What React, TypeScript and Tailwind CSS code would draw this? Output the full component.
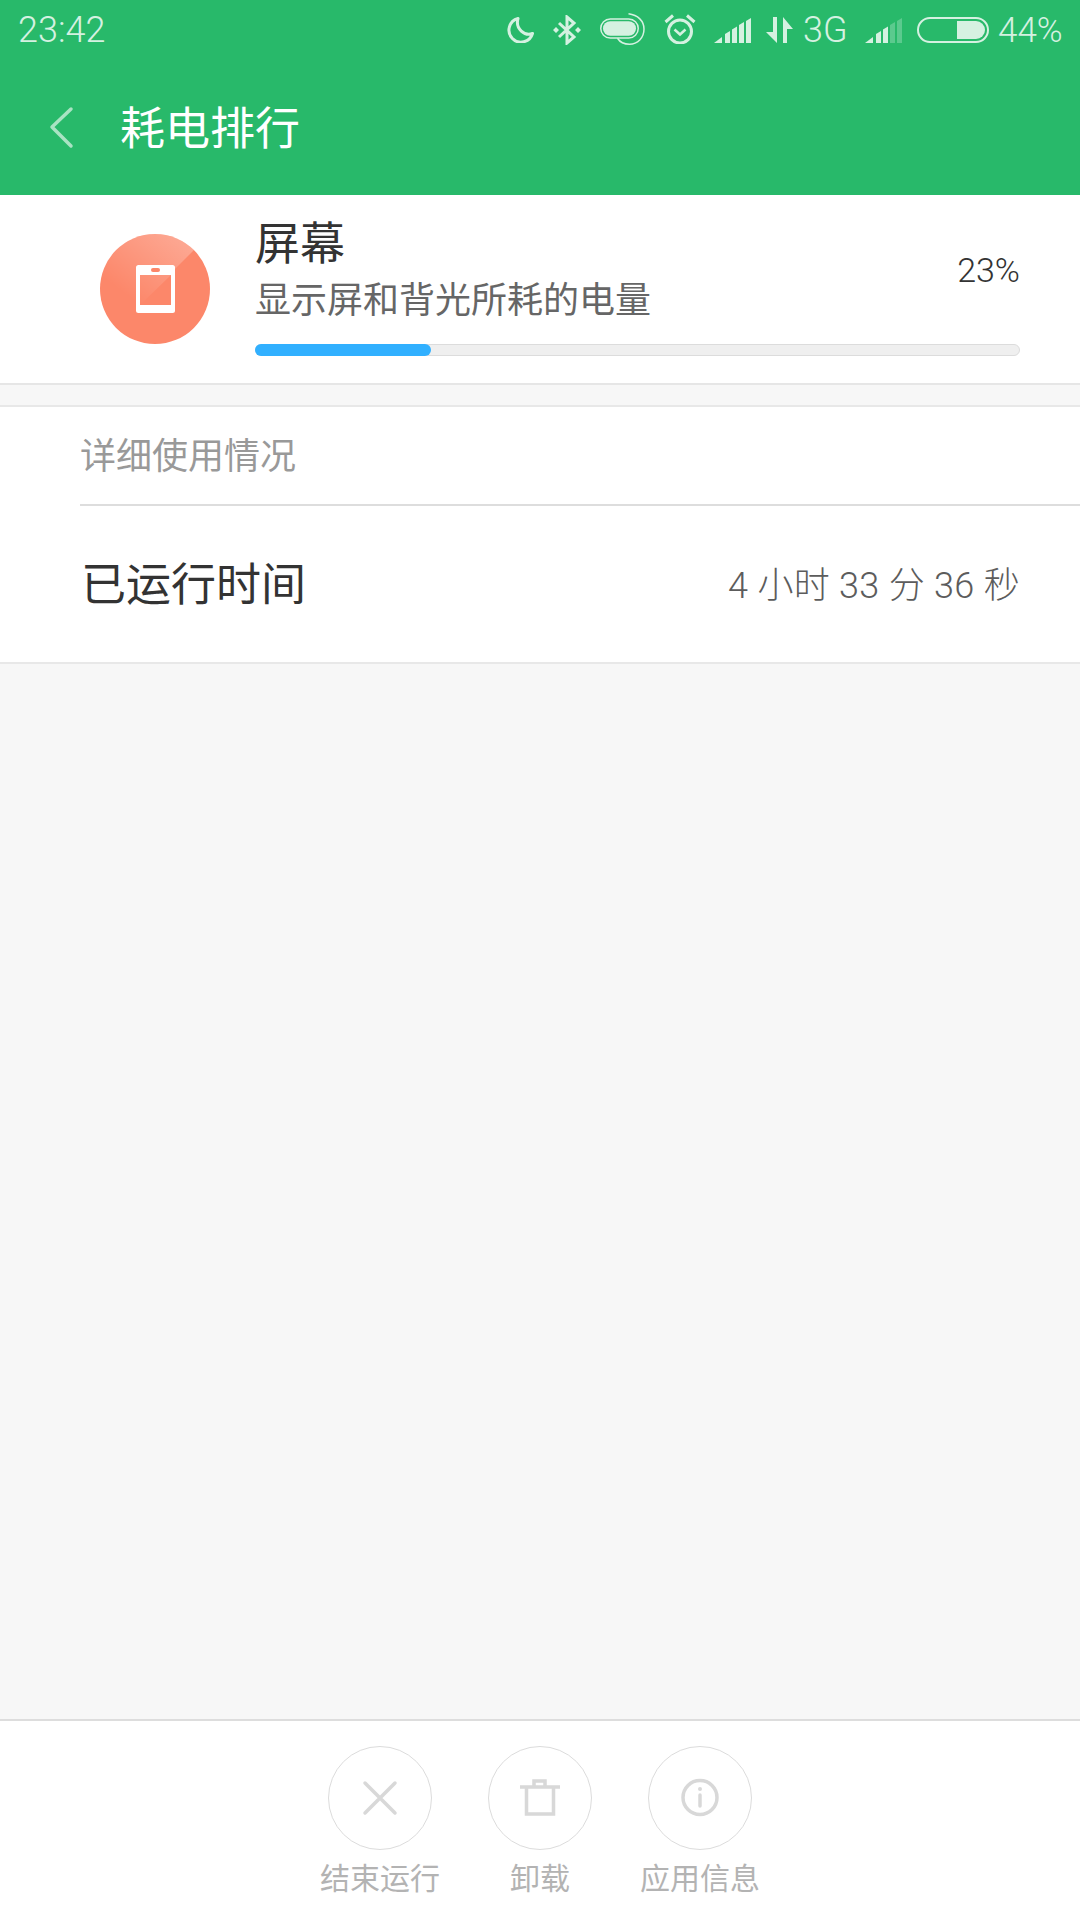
import React from "react";

const font = { fontFamily: "'Roboto', 'Noto Sans CJK SC', sans-serif" };
const c = "#d5f1e1";

function Signal({ dim }: { dim?: boolean }) {
  return (
    <svg width="37" height="25" viewBox="0 0 37 25" className="shrink-0">
      <path d="M0 25l8-6v6z" fill={c} />
      <path d="M11 16l5-3v12h-5z" fill={c} />
      <path d="M18 11.500l5-3V25h-5z" fill={c} />
      <path d="M25 7l5-3v21h-5z" fill={c} fillOpacity={dim ? 0.3 : 1} />
      <path d="M32 3l5-3v25h-5z" fill={c} fillOpacity={dim ? 0.3 : 1} />
    </svg>
  );
}

function StatusRow() {
  return (
    <div className="flex items-center h-[60px] text-[36px] text-[#d5f1e1] leading-none font-light">
      <svg width="27" height="26" viewBox="0 0 27 26" fill="none" className="shrink-0">
        <path d="M11 1.500A12 12 0 1 0 25.500 16.500C18 19.500 8 12 11 1.500z" stroke={c} strokeWidth="3" strokeLinejoin="round" />
      </svg>
      <svg width="28" height="30" viewBox="0 0 28 30" fill="none" className="ml-[19px] shrink-0">
        <path d="M6 8l15 14-7 6V2l7 6L6 22" stroke={c} strokeWidth="3" />
        <path d="M3 12l3 3-3 3-3-3zM25 12l3 3-3 3-3-3z" fill={c} />
      </svg>
      <svg width="45" height="32" viewBox="0 0 45 32" fill="none" className="ml-[19px] mb-[2px] shrink-0">
        <rect x="0.750" y="6" width="37.500" height="19" rx="9.500" stroke={c} strokeWidth="1.500" />
        <rect x="3" y="8.250" width="33" height="14.500" rx="7.250" fill={c} />
        <path d="M28.500 0.750C38 2 44 8 44 16c0 9-6.500 15.250-14.500 15.250-5.500 0-9.500-2-12-6" stroke={c} strokeWidth="1.500" />
      </svg>
      <svg width="32" height="31" viewBox="0 0 32 31" fill="none" className="ml-[19px] mb-[3px] shrink-0">
        <circle cx="16" cy="18.500" r="11.500" stroke={c} strokeWidth="3" />
        <path d="M10.500 16.500l5.500 5 5.500-5" stroke={c} strokeWidth="2.500" />
        <path d="M1.500 9L9 2.500M30.500 9L23 2.500" stroke={c} strokeWidth="3" />
      </svg>
      <div className="ml-[18px] mt-[1px] shrink-0 flex"><Signal /></div>
      <svg width="27" height="26" viewBox="0 0 27 26" className="ml-[15px] shrink-0">
        <path d="M7 0h4v26L0 15h7zM17 26V0l10 12h-6v14z" fill={c} />
      </svg>
      <span className="ml-[10px] w-[42px] text-[36px] shrink-0 whitespace-nowrap">3G</span>
      <div className="ml-[20px] mt-[1px] shrink-0 flex"><Signal dim /></div>
      <svg width="72" height="26" viewBox="0 0 72 26" fill="none" className="ml-[15px] shrink-0">
        <rect x="1" y="1" width="70" height="24" rx="12" stroke={c} strokeWidth="2" />
        <path d="M40 4h19a9 9 0 0 1 0 18H40z" fill={c} />
      </svg>
      <span className="ml-[9px] w-[63px] text-[35px] shrink-0 whitespace-nowrap">44%</span>
    </div>
  );
}

function Action({ label, children }: { label: string; children: React.ReactNode }) {
  return (
    <div className="w-[104px] flex flex-col items-center">
      <div className="w-[104px] h-[104px] rounded-full border border-[#dcdcdc] flex items-center justify-center">
        <svg width="70" height="70" viewBox="0 0 70 70">{children}</svg>
      </div>
      <span className="mt-[14px] text-[30px] leading-none text-[#b3b3b3] whitespace-nowrap">{label}</span>
    </div>
  );
}

export default function App() {
  return (
    <div className="w-[1080px] h-[1920px] flex flex-col bg-[#f7f7f7] overflow-hidden" style={font}>
      <div className="h-[195px] bg-[#28b96a] flex flex-col shrink-0">
        <div className="h-[60px] flex items-center justify-between pl-[18px] pr-[19px] text-[#d5f1e1]">
          <span className="text-[36px] leading-none font-light">23:42</span>
          <StatusRow />
        </div>
        <div className="flex items-center h-[135px]">
          <svg width="26" height="44" viewBox="0 0 26 44" fill="none" className="ml-[48px]">
            <path d="M23 3L4 21l19 19" stroke="#a9e3c3" strokeWidth="3.500" strokeLinecap="round" strokeLinejoin="round" />
          </svg>
          <h1 className="ml-[46px] mt-[3px] text-[45px] font-normal leading-none text-white">耗电排行</h1>
        </div>
      </div>

      <div className="h-[190px] bg-white border-b-2 border-[#e6e6e6] flex shrink-0">
        <div className="ml-[100px] mt-[39px] w-[110px] h-[110px] rounded-full bg-[#fc876a] relative overflow-hidden shrink-0">
          <svg width="110" height="110" viewBox="0 0 110 110" className="absolute inset-0">
            <defs>
              <linearGradient id="sheen" gradientUnits="userSpaceOnUse" x1="70" y1="0" x2="25" y2="60">
                <stop offset="0" stopColor="#ffffff" stopOpacity="0.26" />
                <stop offset="1" stopColor="#ffffff" stopOpacity="0" />
              </linearGradient>
            </defs>
            <path d="M94 16A55 55 0 0 0 16 94z" fill="url(#sheen)" />
            <rect x="36" y="31" width="39" height="48" rx="2.500" fill="#fff" />
            <rect x="51" y="34" width="9" height="4" rx="2" fill="#fc876a" />
            <rect x="40" y="41" width="31" height="30" fill="#fc876a" />
            <path d="M40 41h31L40 71z" fill="url(#sheen)" />
          </svg>
        </div>
        <div className="ml-[45px] mr-[60px] flex-1 flex flex-col">
          <div className="flex-1 flex items-start justify-between">
            <div>
              <div className="text-[45px] leading-none mt-[27px] text-[#333333]">屏幕</div>
              <div className="text-[36px] leading-none mt-[16px] text-[#666666]">显示屏和背光所耗的电量</div>
            </div>
            <span className="text-[34px] leading-none mt-[58px] text-[#333333] font-light">23%</span>
          </div>
          <div className="h-[12px] rounded-full bg-[#efefef] border border-[#dcdcdc] mb-[27px] relative">
            <div className="absolute -inset-y-px -left-px w-[176px] rounded-full bg-[#31b0ff]" />
          </div>
        </div>
      </div>

      <div className="h-[20px] shrink-0" />

      <div className="bg-white border-t-2 border-b-2 border-[#e8e8e8] shrink-0">
        <div className="ml-[80px] h-[99px] border-b-2 border-[#dddddd] flex items-center text-[36px] text-[#999999] leading-none">
          <span className="mt-[2px]">详细使用情况</span>
        </div>
        <div className="h-[156px] pl-[81px] pr-[60px] flex items-center justify-between">
          <span className="mt-[3px] text-[45px] leading-none text-[#333333]">已运行时间</span>
          <span className="mt-[3px] text-[36px] leading-none text-[#5c5c5c] font-light tracking-[0.3px] whitespace-pre">4 小时 33 分 36 秒</span>
        </div>
      </div>

      <div className="flex-1" />

      <div className="h-[201px] bg-white border-t-2 border-[#dddddd] flex justify-center gap-[56px] pt-[25px] shrink-0">
        <Action label="结束运行">
          <path d="M20 20l30 30M50 20L20 50" stroke="#d8d8d8" strokeWidth="3.500" strokeLinecap="round" />
        </Action>
        <Action label="卸载">
          <path d="M15 24h40M21.500 24v27h27V24M29 23v-5h11v5" stroke="#d8d8d8" strokeWidth="3.500" fill="none" />
        </Action>
        <Action label="应用信息">
          <circle cx="35" cy="34.500" r="17" stroke="#d8d8d8" strokeWidth="3.500" fill="none" />
          <path d="M35 32v11" stroke="#d8d8d8" strokeWidth="3.500" strokeLinecap="round" />
          <circle cx="35" cy="26" r="2" fill="#d8d8d8" />
        </Action>
      </div>
    </div>
  );
}
